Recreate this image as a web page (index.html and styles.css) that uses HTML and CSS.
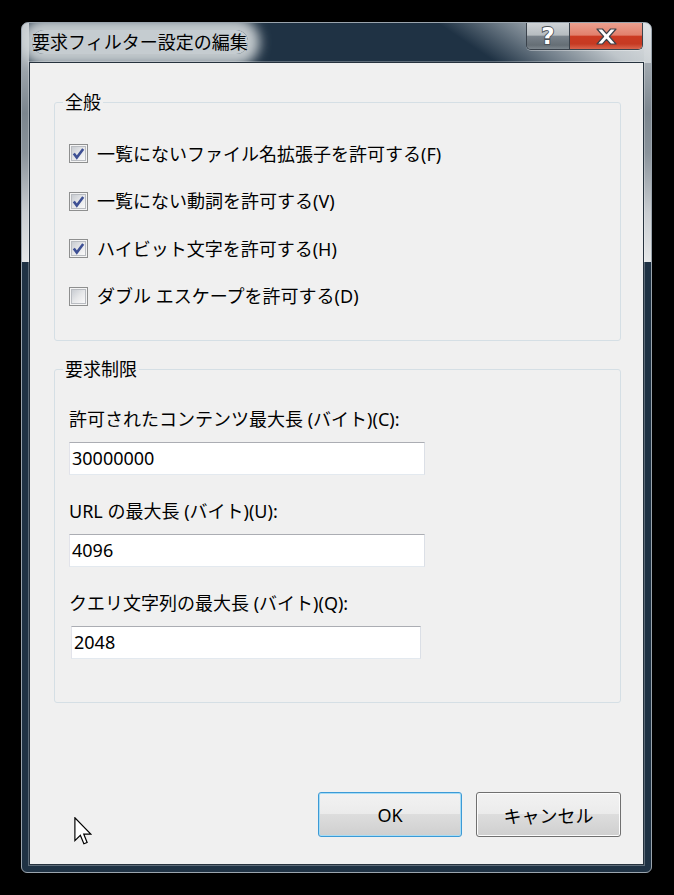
FILE: index.html
```html
<!DOCTYPE html>
<html lang="ja">
<head>
<meta charset="utf-8">
<title>要求フィルター設定の編集</title>
<link rel="stylesheet" href="styles.css">
</head>
<body>
<svg class="defs" width="0" height="0" aria-hidden="true">
  <defs>
    <linearGradient id="cbg" x1="0" y1="0" x2="1" y2="1">
      <stop offset="0" stop-color="#c6cad0"/>
      <stop offset="0.5" stop-color="#e6e7e9"/>
      <stop offset="1" stop-color="#fbfbfb"/>
    </linearGradient>
  </defs>
</svg>
<div class="window">
  <div class="titlebar">
    <span class="title">要求フィルター設定の編集</span>
    <div class="caption">
      <div class="cbtn help">
        <svg width="22" height="24" viewBox="0 0 22 24"><text x="11" y="20" text-anchor="middle" class="qmark">?</text></svg>
      </div>
      <div class="cbtn close">
        <svg width="21" height="17" viewBox="0 0 21 17"><polygon class="xmark" points="1,1 6.5,1 10.5,5.6 14.5,1 20,1 13.4,8.5 20,16 14.5,16 10.5,11.4 6.5,16 1,16 7.6,8.5"/></svg>
      </div>
    </div>
  </div>
  <div class="client">
    <fieldset class="group group-general">
      <legend>全般</legend>
      <div class="group-body">
        <label class="check-row">
          <svg class="cb" width="19" height="19" viewBox="0 0 19 19"><rect x="0.5" y="0.5" width="18" height="18" fill="#f4f4f4" stroke="#8e8f8f"/><rect x="2.5" y="2.5" width="14" height="14" fill="url(#cbg)" stroke="#b9bcc1"/><polyline points="4.8,9.4 7.8,13.6 14.2,5" fill="none" stroke="#3e5094" stroke-width="2.6"/></svg>
          <span>一覧にないファイル名拡張子を許可する(F)</span>
        </label>
        <label class="check-row">
          <svg class="cb" width="19" height="19" viewBox="0 0 19 19"><rect x="0.5" y="0.5" width="18" height="18" fill="#f4f4f4" stroke="#8e8f8f"/><rect x="2.5" y="2.5" width="14" height="14" fill="url(#cbg)" stroke="#b9bcc1"/><polyline points="4.8,9.4 7.8,13.6 14.2,5" fill="none" stroke="#3e5094" stroke-width="2.6"/></svg>
          <span>一覧にない動詞を許可する(V)</span>
        </label>
        <label class="check-row">
          <svg class="cb" width="19" height="19" viewBox="0 0 19 19"><rect x="0.5" y="0.5" width="18" height="18" fill="#f4f4f4" stroke="#8e8f8f"/><rect x="2.5" y="2.5" width="14" height="14" fill="url(#cbg)" stroke="#b9bcc1"/><polyline points="4.8,9.4 7.8,13.6 14.2,5" fill="none" stroke="#3e5094" stroke-width="2.6"/></svg>
          <span>ハイビット文字を許可する(H)</span>
        </label>
        <label class="check-row">
          <svg class="cb" width="19" height="19" viewBox="0 0 19 19"><rect x="0.5" y="0.5" width="18" height="18" fill="#f4f4f4" stroke="#8e8f8f"/><rect x="2.5" y="2.5" width="14" height="14" fill="url(#cbg)" stroke="#b9bcc1"/></svg>
          <span>ダブル エスケープを許可する(D)</span>
        </label>
      </div>
    </fieldset>
    <fieldset class="group group-limits">
      <legend>要求制限</legend>
      <div class="group-body">
        <div class="field">
          <div class="field-label">許可されたコンテンツ最大長 (バイト)(C):</div>
          <div class="textbox">30000000</div>
        </div>
        <div class="field">
          <div class="field-label">URL の最大長 (バイト)(U):</div>
          <div class="textbox">4096</div>
        </div>
        <div class="field">
          <div class="field-label">クエリ文字列の最大長 (バイト)(Q):</div>
          <div class="textbox narrow">2048</div>
        </div>
      </div>
    </fieldset>
    <div class="buttons">
      <button class="btn btn-default">OK</button>
      <button class="btn btn-cancel">キャンセル</button>
    </div>
  </div>
</div>
<svg class="cursor" width="18" height="28" viewBox="0 0 12 19"><path d="M0.5,0.5 L0.5,16 L4.2,12.4 L6.6,18.2 L8.8,17.3 L6.5,11.6 L11.3,11.6 Z" fill="#fff" stroke="#000" stroke-width="0.8" stroke-linejoin="miter"/></svg>
</body>
</html>
```
FILE: styles.css
```css
html {
  background: #000;
}
body {
  margin: 0;
  padding: 22px 0 0 21px;
  background: #000;
  font-family: "Noto Sans", "Noto Sans CJK JP", sans-serif;
  color: #000;
  position: relative;
  min-height: 873px;
  box-sizing: border-box;
}
.defs {
  position: absolute;
  width: 0;
  height: 0;
}
.window {
  width: 631px;
  height: 851px;
  box-sizing: border-box;
  border: 1px solid #9aa4ad;
  border-radius: 7px 7px 6px 6px;
  padding: 0 7px 7px 7px;
  display: flex;
  flex-direction: column;
  overflow: hidden;
  background:
    linear-gradient(34deg, rgba(31,50,68,0) 69%, rgba(130,142,152,.8) 78%, rgba(200,206,210,.95) 88%, #e1e4e6 100%) 0 0 / 100% 40px no-repeat,
    linear-gradient(#c4cacf 0, #aab1b7 30px, #7b858e 90px, #8a939b 130px, #c9cdd1 190px, #e5e7e8 239px) 0 0 / 7px 239px no-repeat,
    linear-gradient(#c4cacf 0, #aab1b7 30px, #7b858e 90px, #8a939b 130px, #c9cdd1 190px, #e5e7e8 239px) 100% 0 / 7px 239px no-repeat,
    #1f3244;
}
.titlebar {
  flex: none;
  height: 39px;
  display: flex;
  justify-content: space-between;
  align-items: flex-start;
}
.title {
  margin: 7px 0 0 3px;
  font-size: 18px;
  line-height: 24px;
  white-space: nowrap;
  background: rgba(212,217,220,.92);
  box-shadow: 0 0 12px 12px rgba(212,217,220,.9);
  border-radius: 12px;
}
.caption {
  display: flex;
  margin-right: 1px;
  border: 1px solid #3a424b;
  border-top: none;
  border-radius: 0 0 5px 5px;
  overflow: hidden;
  box-shadow: 0 1px 0 rgba(255,255,255,.35);
}
.cbtn {
  height: 26px;
  display: flex;
  align-items: center;
  justify-content: center;
}
.help {
  width: 42px;
  border-right: 1px solid #3a424b;
  background: linear-gradient(#cfd3d6 0%, #b6bcc0 46%, #79828a 52%, #656e75 85%, #7d868d 100%);
}
.close {
  width: 72px;
  background: linear-gradient(#eba08f 0%, #e2806c 46%, #cb3a22 52%, #c63a22 80%, #d9654d 100%);
}
.qmark {
  font-family: "DejaVu Sans", sans-serif;
  font-weight: bold;
  font-size: 23px;
  fill: #fff;
  stroke: #4a5158;
  stroke-width: 1.8px;
  paint-order: stroke;
}
.xmark {
  fill: #fff;
  stroke: #3d424a;
  stroke-width: 1.2;
  stroke-linejoin: round;
}
.client {
  flex: 1;
  box-sizing: border-box;
  background: #f0f0f0;
  border: 1px solid #26323e;
  box-shadow: 0 0 0 1px rgba(255,255,255,.28);
  padding: 27px 22px 27px 24px;
  display: flex;
  flex-direction: column;
}
.group {
  margin: 0;
  padding: 0 0 20px 0;
  border: 1px solid #d5dfe5;
  border-radius: 3px;
  min-width: 0;
}
.group legend {
  margin-left: 8px;
  padding: 0 2px;
  font-size: 18px;
  line-height: 24px;
}
.group-body {
  padding: 16px 14px 0;
}
.check-row {
  display: flex;
  align-items: center;
  gap: 9px;
  height: 47.5px;
  font-size: 18px;
  line-height: 24px;
}
.cb {
  flex: none;
  display: block;
}
.group-limits {
  margin-top: 16px;
  padding-bottom: 43px;
}
.group-limits .group-body {
  padding-top: 26px;
}
.field + .field {
  margin-top: 24px;
}
.field-label {
  font-size: 18px;
  line-height: 24px;
  margin-bottom: 11px;
  white-space: nowrap;
}
.textbox {
  width: 356px;
  height: 33px;
  box-sizing: border-box;
  border: 1px solid;
  border-color: #abadb3 #dbdfe6 #e3e9ef #e2e3ea;
  background: #fff;
  padding-left: 2px;
  font-size: 18px;
  line-height: 31px;
}
.textbox.narrow {
  width: 350px;
  margin-left: 2px;
}
.buttons {
  margin-top: auto;
  display: flex;
  justify-content: flex-end;
  gap: 14px;
}
.btn {
  height: 45px;
  box-sizing: border-box;
  border: 1px solid #707070;
  border-radius: 3px;
  background: linear-gradient(#f2f2f2 0%, #ebebeb 50%, #dddddd 50%, #cfcfcf 100%);
  box-shadow: inset 0 0 0 1px #fcfcfc;
  font-family: "Noto Sans", "Noto Sans CJK JP", sans-serif;
  font-size: 18px;
  color: #000;
  padding: 0;
}
.btn-default {
  width: 144px;
  border-color: #3c9ad6;
  box-shadow: inset 0 0 0 1px #a6dcf5;
}
.btn-cancel {
  width: 145px;
}
.cursor {
  position: absolute;
  left: 74px;
  top: 817px;
}
```
